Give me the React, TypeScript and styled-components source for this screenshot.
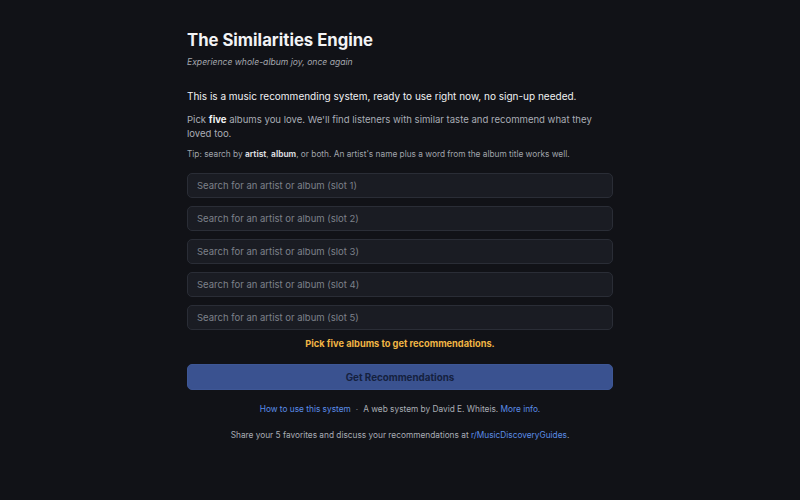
import React from "react";
import styled, { createGlobalStyle } from "styled-components";

const Global = createGlobalStyle`
  html, body { margin: 0; padding: 0; background: #111217; }
  body { font-family: Inter, "Noto Sans", sans-serif; color: #e6e7ea; }
  * { box-sizing: border-box; }
`;

const Page = styled.div`
  width: 800px;
  min-height: 500px;
  display: flex;
  justify-content: center;
  padding-top: 29px;
`;

const Main = styled.main`
  width: 426px;
  display: flex;
  flex-direction: column;
`;

const Title = styled.h1`
  margin: 0;
  font-size: 16.7px;
  font-weight: 700;
  color: #f2f3f5;
  line-height: 22px;
`;

const Subtitle = styled.p`
  margin: 4px 0 0;
  font-size: 8.6px;
  font-style: italic;
  color: #a4a7ae;
  line-height: 14px;
`;

const Lead = styled.p`
  margin: 19px 0 0;
  font-size: 10px;
  color: #f0f1f3;
  line-height: 16px;
`;

const Body = styled.p`
  margin: 9px 0 0;
  font-size: 9.55px;
  color: #a9adb5;
  line-height: 14px;
  b { color: #f2f3f5; font-weight: 700; }
`;

const Tip = styled.p`
  margin: 7px 0 0;
  font-size: 8.3px;
  color: #a0a4ab;
  line-height: 12px;
  b { color: #d6d8dc; font-weight: 700; }
`;

const Slots = styled.div`
  display: flex;
  flex-direction: column;
  gap: 8px;
  margin-top: 13px;
`;

const SearchInput = styled.input`
  height: 25px;
  width: 100%;
  background: #1a1c23;
  border: 1px solid #2a2d36;
  border-radius: 5px;
  padding: 0 9px;
  font-family: Inter, "Noto Sans", sans-serif;
  font-size: 9.5px;
  color: #e6e7ea;
  outline: none;
  &::placeholder { color: #7d818a; }
`;

const Warning = styled.p`
  margin: 7px 0 0;
  text-align: center;
  font-size: 9.25px;
  font-weight: 700;
  color: #f0b545;
  line-height: 14px;
`;

const Button = styled.button`
  margin-top: 13px;
  height: 26px;
  width: 100%;
  background: #3a5290;
  border: 1px solid #3e5796;
  border-radius: 5px;
  color: #15213f;
  font-family: Inter, "Noto Sans", sans-serif;
  font-size: 9.8px;
  font-weight: 700;
  cursor: default;
`;

const Footer = styled.p`
  margin: 12px 0 0;
  text-align: center;
  font-size: 8.3px;
  color: #a9adb5;
  line-height: 14px;
`;

const Link = styled.a`
  color: #5b8de8;
  text-decoration: none;
`;

const Dot = styled.span`
  margin: 0 5px;
  color: #7d818a;
`;

export default function App() {
  return (
    <Page>
      <Global />
      <Main>
        <Title>The Similarities Engine</Title>
        <Subtitle>Experience whole-album joy, once again</Subtitle>
        <Lead>This is a music recommending system, ready to use right now, no sign-up needed.</Lead>
        <Body>
          Pick <b>five</b> albums you love. We'll find listeners with similar taste and recommend what they loved too.
        </Body>
        <Tip>
          Tip: search by <b>artist</b>, <b>album</b>, or both. An artist's name plus a word from the album title works well.
        </Tip>
        <Slots>
          {[1, 2, 3, 4, 5].map((n) => (
            <SearchInput key={n} placeholder={`Search for an artist or album (slot ${n})`} />
          ))}
        </Slots>
        <Warning>Pick five albums to get recommendations.</Warning>
        <Button>Get Recommendations</Button>
        <Footer>
          <Link href="#">How to use this system</Link>
          <Dot>·</Dot>A web system by David E. Whiteis. <Link href="#">More info.</Link>
        </Footer>
        <Footer>
          Share your 5 favorites and discuss your recommendations at <Link href="#">r/MusicDiscoveryGuides</Link>.
        </Footer>
      </Main>
    </Page>
  );
}
